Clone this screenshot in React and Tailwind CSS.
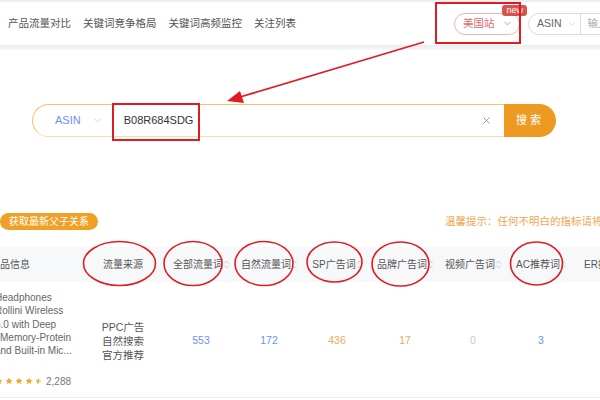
import { ChevronDown, X } from 'lucide-react';

const cols = [
  { label: '全部流量词', value: '553', color: 'text-[#6f8ff2]' },
  { label: '自然流量词', value: '172', color: 'text-[#6f8ff2]' },
  { label: 'SP广告词', value: '436', color: 'text-[#f2a75a]' },
  { label: '品牌广告词', value: '17', color: 'text-[#f2a75a]' },
  { label: '视频广告词', value: '0', color: 'text-[#c8c8c8]' },
  { label: 'AC推荐词', value: '3', color: 'text-[#6f8ff2]' },
  { label: 'ER推荐词', value: '', color: 'text-[#6f8ff2]' },
];

const SortIcon = () => (
  <svg width="5" height="9" viewBox="0 0 5 9" className="ml-[1px] shrink-0">
    <path d="M0.5 3.5 L2.5 1 L4.5 3.5" fill="none" stroke="#c9ccd2" strokeWidth="0.9" />
    <path d="M0.5 5.5 L2.5 8 L4.5 5.5" fill="none" stroke="#c9ccd2" strokeWidth="0.9" />
  </svg>
);

const Star = ({ half }) => (
  <svg width="8" height="8" viewBox="0 0 24 24">
    <defs>
      <clipPath id="halfclip">
        <rect x="0" y="0" width="12" height="24" />
      </clipPath>
    </defs>
    {half && <path d="M12 2l3 6.5 7 .8-5.2 4.8 1.4 7L12 17.6 5.8 21.1l1.4-7L2 9.3l7-.8z" fill="#e5e5e5" />}
    <path
      d="M12 2l3 6.5 7 .8-5.2 4.8 1.4 7L12 17.6 5.8 21.1l1.4-7L2 9.3l7-.8z"
      fill="#f5a623"
      clipPath={half ? 'url(#halfclip)' : undefined}
    />
  </svg>
);

export default function App() {
  return (
    <div
      className="relative w-[600px] h-[400px] overflow-hidden bg-white"
      style={{ fontFamily: '"Liberation Sans", "Noto Sans CJK SC", sans-serif' }}
    >
      {/* 顶部导航 */}
      <div className="h-[2px] bg-[#eeeeee]" />
      <div className="h-[43px] flex items-center whitespace-nowrap">
        <div className="flex items-center gap-[12px] pl-[8px] text-[10.5px] text-[#555]">
          <span>产品流量对比</span>
          <span>关键词竞争格局</span>
          <span>关键词高频监控</span>
          <span>关注列表</span>
        </div>
        <div className="ml-[158px] relative w-[66px] h-[22px] shrink-0 rounded-full border border-[#f0b4b4] flex items-center justify-between pl-[8px] pr-[6px] text-[10.5px] text-[#e06a6a]">
          <span>美国站</span>
          <ChevronDown size={11} strokeWidth={1.5} />
          <span className="absolute -top-[9px] -right-[8px] h-[11px] px-[4px] rounded-[3px] bg-[#d9534a] text-white text-[9px] leading-[11px]">
            new
          </span>
        </div>
        <div className="ml-[8px] w-[120px] h-[22px] shrink-0 rounded-l-full border border-[#dcdcdc] flex items-center text-[10.5px] text-[#666]">
          <span className="pl-[8px]">ASIN</span>
          <ChevronDown size={10} strokeWidth={1.3} className="ml-[5px] text-[#bbb]" />
          <span className="ml-[3px] h-full border-l border-[#dcdcdc]" />
          <span className="ml-[7px] text-[#aaa]">输入</span>
        </div>
      </div>
      <div className="h-[5px] bg-gradient-to-b from-[#ececec] to-[#f8f8f8]" />

      {/* 搜索框 */}
      <div className="mt-[54px] ml-[32px] w-[524px] h-[33px] flex">
        <div className="flex-1 flex items-center rounded-l-full border border-r-0 border-t-[#f6c06a] border-l-[#f6c06a] border-b-[#fbdcae]">
          <span className="pl-[22px] text-[11px] text-[#6f8ff2]">ASIN</span>
          <ChevronDown size={11} strokeWidth={1.3} className="ml-[11px] text-[#9fb3f5]" />
          <span className="ml-[9px] h-[25px] border-l border-[#e6e6e6]" />
          <span className="ml-[11px] text-[11px] text-[#333]">B08R684SDG</span>
          <X size={11} strokeWidth={1.6} className="ml-auto mr-[12px] text-[#777]" />
        </div>
        <button className="w-[52px] h-full rounded-r-full bg-[#ee9a22] text-white text-[11px] tracking-[3px]">
          搜索
        </button>
      </div>

      {/* 操作栏 */}
      <div className="mt-[76px] flex items-center justify-between whitespace-nowrap">
        <span className="h-[17px] px-[9px] rounded-full bg-[#f0a024] text-white text-[10px] leading-[17px]">
          获取最新父子关系
        </span>
        <span className="w-[155px] overflow-hidden text-[10.5px] text-[#f2a550]">
          温馨提示：任何不明白的指标请将鼠标移到问号上查看
        </span>
      </div>

      {/* 表格 */}
      <div className="mt-[17px] -ml-[10px] w-[700px]">
        <div className="h-[35px] bg-[#f7f8fa] flex items-center text-[10px] text-[#555] whitespace-nowrap">
          <div className="w-[89px]">产品信息</div>
          <div className="w-[88px] text-center">流量来源</div>
          {cols.map((c) => (
            <div key={c.label} className="w-[68px] flex items-center justify-center">
              <span>{c.label}</span>
              <SortIcon />
            </div>
          ))}
        </div>
        <div className="h-[116px] flex items-center border-b border-[#eeeeee]">
          <div className="w-[89px] pl-[5px] self-stretch flex flex-col pt-[9px] text-[10px] text-[#666] leading-[13.3px] whitespace-nowrap">
            <div>Headphones</div>
            <div>Rollini Wireless</div>
            <div>5.0 with Deep</div>
            <div className="pl-[5px]">Memory-Protein</div>
            <div>and Built-in Mic...</div>
            <div className="mt-auto mb-[9px] flex items-center gap-[2px]">
              <Star />
              <Star />
              <Star />
              <Star />
              <Star half />
              <span className="ml-[1px] text-[10px] text-[#777]">2,288</span>
            </div>
          </div>
          <div className="w-[88px] flex flex-col items-center pt-[3px] text-[10.5px] leading-[14px] text-[#555]">
            <span>PPC广告</span>
            <span>自然搜索</span>
            <span>官方推荐</span>
          </div>
          {cols.map((c) => (
            <div key={c.label} className={`w-[68px] text-center pt-[2px] text-[10.5px] ${c.color}`}>
              {c.value}
            </div>
          ))}
        </div>
      </div>

      {/* 标注 */}
      <svg className="absolute inset-0 pointer-events-none" width="600" height="400">
        <rect x="436" y="3" width="84" height="40" fill="none" stroke="#e21b23" strokeWidth="2" />
        <rect x="113" y="104" width="86" height="36" fill="none" stroke="#e21b23" strokeWidth="2" />
        <line x1="424" y1="42" x2="240" y2="97" stroke="#e21b23" strokeWidth="1.8" />
        <path d="M227 101 L240 91 L244 103 Z" fill="#e21b23" />
        <ellipse cx="119.5" cy="263.5" rx="36" ry="22" fill="none" stroke="#e21b23" strokeWidth="1.6" />
        <ellipse cx="193" cy="263.5" rx="29" ry="22" fill="none" stroke="#e21b23" strokeWidth="1.6" />
        <ellipse cx="264" cy="263.5" rx="29" ry="22" fill="none" stroke="#e21b23" strokeWidth="1.6" />
        <ellipse cx="334.5" cy="262" rx="27.5" ry="20" fill="none" stroke="#e21b23" strokeWidth="1.6" />
        <ellipse cx="400.5" cy="264" rx="28.5" ry="22" fill="none" stroke="#e21b23" strokeWidth="1.6" />
        <ellipse cx="536.5" cy="263.5" rx="26" ry="21.5" fill="none" stroke="#e21b23" strokeWidth="1.6" />
      </svg>
    </div>
  );
}
